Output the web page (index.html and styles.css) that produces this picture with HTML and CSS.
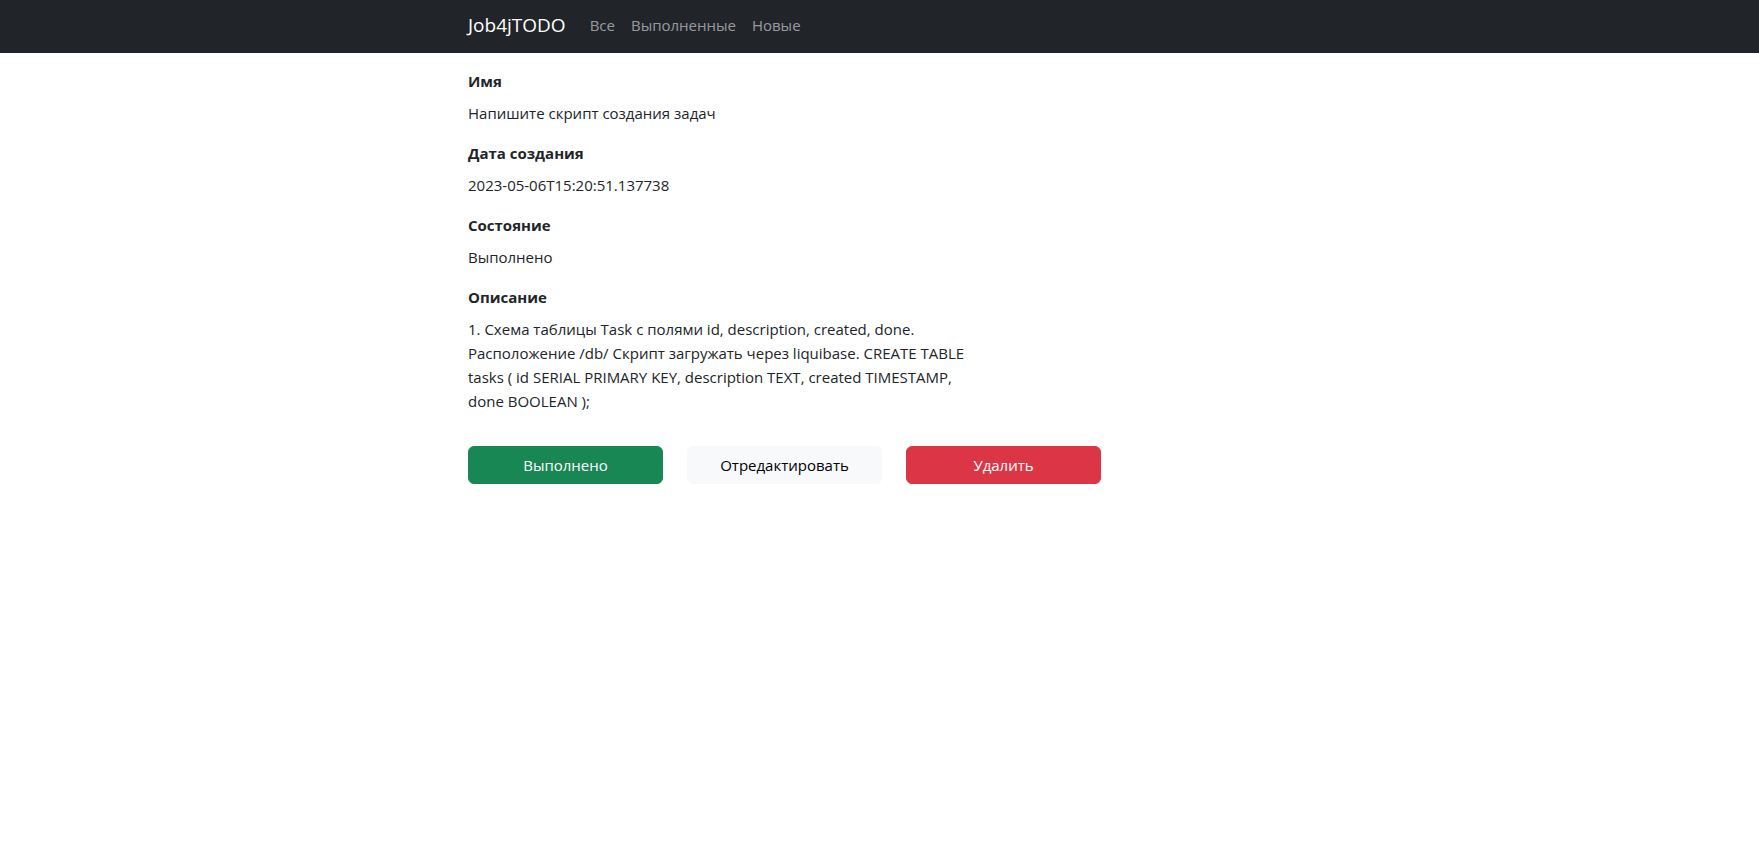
FILE: index.html
```html
<!DOCTYPE html>
<html lang="ru">
<head>
<meta charset="utf-8">
<title>Job4jTODO</title>
<link rel="stylesheet" href="styles.css">
</head>
<body>
<nav class="navbar">
  <div class="container nav-inner">
    <a class="brand" href="#">Job4jTODO</a>
    <ul class="nav-links">
      <li><a href="#">Все</a></li>
      <li><a href="#">Выполненные</a></li>
      <li><a href="#">Новые</a></li>
    </ul>
  </div>
</nav>
<main class="container content">
  <section class="field">
    <h6 class="label">Имя</h6>
    <p class="value">Напишите скрипт создания задач</p>
  </section>
  <section class="field">
    <h6 class="label">Дата создания</h6>
    <p class="value">2023-05-06T15:20:51.137738</p>
  </section>
  <section class="field">
    <h6 class="label">Состояние</h6>
    <p class="value">Выполнено</p>
  </section>
  <section class="field">
    <h6 class="label">Описание</h6>
    <p class="value description">1. Схема таблицы Task с полями id, description, created, done. Расположение /db/ Скрипт загружать через liquibase. CREATE TABLE tasks ( id SERIAL PRIMARY KEY, description TEXT, created TIMESTAMP, done BOOLEAN );</p>
  </section>
  <div class="actions">
    <button class="btn btn-success">Выполнено</button>
    <button class="btn btn-light">Отредактировать</button>
    <button class="btn btn-danger">Удалить</button>
  </div>
</main>
</body>
</html>
```
FILE: styles.css
```css
* { box-sizing: border-box; }
html, body { margin: 0; padding: 0; }
body {
  font-family: "Open Sans", "Noto Sans", sans-serif;
  font-size: 15px;
  line-height: 24px;
  color: #212529;
  background: #fff;
}
.container {
  width: 823px;
  margin: 0 auto;
}
.navbar {
  background: #212529;
  height: 53px;
}
.nav-inner {
  display: flex;
  align-items: center;
  height: 53px;
  padding-bottom: 4px;
}
.brand {
  font-size: 19px;
  line-height: 30px;
  color: #fff;
  text-decoration: none;
  margin-right: 16px;
}
.nav-links {
  display: flex;
  list-style: none;
  margin: 0;
  padding: 0;
}
.nav-links a {
  display: block;
  padding: 8px;
  color: rgba(255, 255, 255, 0.55);
  text-decoration: none;
}
.content {
  padding-top: 16px;
}
.field { margin: 0; }
.label {
  margin: 0 0 8px;
  font-size: 15px;
  font-weight: 700;
  line-height: 24px;
}
.value {
  margin: 0 0 16px;
}
.description {
  max-width: 520px;
}
.actions {
  display: flex;
  gap: 24px;
  padding-top: 17px;
}
.btn {
  width: 195px;
  height: 38px;
  padding: 6px 12px;
  font-family: inherit;
  font-size: 15px;
  line-height: 24px;
  border: 1px solid transparent;
  border-radius: 6px;
  cursor: pointer;
}
.btn-success { background: #198754; border-color: #198754; color: #fff; }
.btn-light { background: #f8f9fa; border-color: #f8f9fa; color: #000; }
.btn-danger { background: #dc3545; border-color: #dc3545; color: #fff; }
```
